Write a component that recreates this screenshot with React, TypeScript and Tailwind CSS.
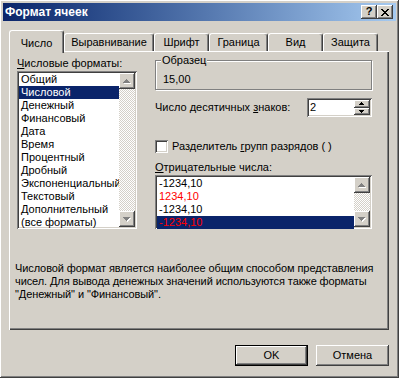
import React from "react";

const raised =
  "shadow-[inset_-1px_-1px_#404040,inset_1px_1px_#ffffff,inset_-2px_-2px_#808080,inset_2px_2px_#d4d0c8]";
const sunken =
  "shadow-[inset_1px_1px_#808080,inset_-1px_-1px_#ffffff,inset_2px_2px_#404040,inset_-2px_-2px_#d4d0c8]";
const dither =
  "bg-[conic-gradient(#ffffff_25%,#d4d0c8_0_50%,#ffffff_0_75%,#d4d0c8_0)] [background-size:2px_2px]";

// pixel triangle, rows drawn as rects so the edges stay crisp
const Tri: React.FC<{ up: boolean; size: number; fill: string; shade?: string }> = ({ up, size, fill, shade }) => {
  const h = Math.ceil(size / 2);
  const rows = Array.from({ length: h }, (_, i) => {
    const r = up ? i : h - 1 - i;
    return { y: i, x: h - 1 - r, w: 2 * r + 1 };
  });
  return (
    <svg width={size + 1} height={h + 1} shapeRendering="crispEdges">
      {shade &&
        rows.map((r) => <rect key={"s" + r.y} x={r.x + 1} y={r.y + 1} width={r.w} height={1} fill={shade} />)}
      {rows.map((r) => (
        <rect key={r.y} x={r.x} y={r.y} width={r.w} height={1} fill={fill} />
      ))}
    </svg>
  );
};

const ScrollBar: React.FC = () => (
  <div className={`flex w-[16px] flex-col ${dither}`}>
    <div className={`flex h-[16px] w-[16px] items-center justify-center bg-[#d4d0c8] ${raised}`}>
      <Tri up size={7} fill="#808080" shade="#ffffff" />
    </div>
    <div className="flex-1" />
    <div className={`flex h-[16px] w-[16px] items-center justify-center bg-[#d4d0c8] ${raised}`}>
      <Tri up={false} size={7} fill="#808080" shade="#ffffff" />
    </div>
  </div>
);

const formats = [
  "Общий",
  "Числовой",
  "Денежный",
  "Финансовый",
  "Дата",
  "Время",
  "Процентный",
  "Дробный",
  "Экспоненциальный",
  "Текстовый",
  "Дополнительный",
  "(все форматы)",
];

const negatives = [
  { text: "-1234,10", red: false },
  { text: "1234,10", red: true },
  { text: "-1234,10", red: false },
  { text: "-1234,10", red: true },
];

const tabs = ["Число", "Выравнивание", "Шрифт", "Граница", "Вид", "Защита"];
const tabWidths = [55, 90, 55, 59, 55, 55];

const Tab: React.FC<{ label: string; width: number; active: boolean }> = ({ label, width, active }) => (
  <div
    style={{ width }}
    className={
      active
        ? "relative z-10 -mb-[2px] flex h-[23px] items-start justify-center rounded-t-[3px] border-l border-t border-r border-white border-r-[#404040] bg-[#d4d0c8] pt-[6px] shadow-[inset_-1px_0_#808080]"
        : "flex h-[18px] items-start justify-center rounded-t-[3px] border-l border-t border-r border-white border-r-[#404040] bg-[#d4d0c8] pt-[2px] shadow-[inset_-1px_0_#808080]"
    }
  >
    <span className="leading-[13px]">{label}</span>
  </div>
);

const Btn: React.FC<{ label: string; primary?: boolean }> = ({ label, primary }) => (
  <div className={primary ? "h-[21px] w-[73px] border border-black" : "h-[21px] w-[73px]"}>
    <div className={`flex h-full w-full items-center justify-center bg-[#d4d0c8] ${raised}`}>{label}</div>
  </div>
);

export default function App() {
  return (
    <div
      className={`flex h-[378px] w-[399px] flex-col bg-[#d4d0c8] p-[3px] font-['Liberation_Sans',Arial,sans-serif] text-[11px] leading-[13px] text-black ${raised}`}
    >
      {/* title bar */}
      <div className="flex h-[18px] items-center bg-gradient-to-r from-[#0a246a] to-[#a6caf0] pl-[2px] pr-[3px]">
        <span className="flex-1 text-[12px] font-bold text-white">Формат ячеек</span>
        <div className={`flex h-[14px] w-[16px] items-center justify-center bg-[#d4d0c8] pb-[1px] font-bold ${raised}`}>
          ?
        </div>
        <div className={`flex h-[14px] w-[16px] items-center justify-center bg-[#d4d0c8] ${raised}`}>
          <svg width="8" height="7" shapeRendering="crispEdges">
            {Array.from({ length: 7 }, (_, i) => (
              <g key={i}>
                <rect x={i} y={i} width={2} height={1} fill="#000" />
                <rect x={6 - i} y={i} width={2} height={1} fill="#000" />
              </g>
            ))}
          </svg>
        </div>
      </div>

      {/* tabs + page */}
      <div className="mx-[6px] mt-[9px] flex flex-col">
        <div className="flex h-[21px] items-end">
          {tabs.map((t, i) => (
            <Tab key={t} label={t} width={tabWidths[i]} active={i === 0} />
          ))}
        </div>
        <div
          className={`flex h-[279px] w-[380px] flex-col pt-[6px] shadow-[inset_1px_1px_#ffffff,inset_-1px_-1px_#404040,inset_-2px_-2px_#808080]`}
        >
          <div className="flex">
            {/* left: format list */}
            <div className="ml-[8px] flex flex-col">
              <div className="h-[13px]">
                <span className="underline underline-offset-[1px]">Ч</span>исловые форматы:
              </div>
              <div className={`mt-[1px] flex h-[158px] w-[120px] bg-white p-[2px] ${sunken}`}>
                <div className="flex w-[100px] flex-col">
                  {formats.map((f, i) => (
                    <div
                      key={f}
                      className={
                        i === 1
                          ? "h-[13px] whitespace-nowrap bg-[#0a246a] pl-[2px] text-white"
                          : "h-[13px] whitespace-nowrap pl-[2px]"
                      }
                    >
                      {f}
                    </div>
                  ))}
                </div>
                <ScrollBar />
              </div>
            </div>

            {/* right side */}
            <div className="ml-[18px] mt-[3px] flex w-[217px] flex-col">
              <div className="relative h-[30px] w-[217px] border border-[#808080] pl-[7px] pt-[12px] shadow-[inset_1px_1px_#ffffff,1px_1px_#ffffff]">
                <span className="absolute -top-[7px] left-[5px] bg-[#d4d0c8] px-[1px]">Образец</span>
                15,00
              </div>

              <div className="mt-[8px] flex h-[19px] items-center justify-between">
                <span>
                  Число десятичных <span className="underline underline-offset-[1px]">з</span>наков:
                </span>
                <div className={`flex h-[19px] w-[65px] bg-white p-[2px] ${sunken}`}>
                  <span className="flex-1 pl-[1px] leading-[15px]">2</span>
                  <div className="flex w-[16px] flex-col">
                    <div className={`flex h-[8px] items-center justify-center bg-[#d4d0c8] ${raised}`}>
                      <Tri up size={5} fill="#000" />
                    </div>
                    <div className={`flex h-[7px] items-center justify-center bg-[#d4d0c8] ${raised}`}>
                      <Tri up={false} size={5} fill="#000" />
                    </div>
                  </div>
                </div>
              </div>

              <div className="mt-[23px] flex h-[13px] items-center">
                <div className={`h-[13px] w-[13px] bg-white ${sunken}`} />
                <span className="ml-[4px] whitespace-nowrap">
                  Разделитель <span className="underline underline-offset-[1px]">г</span>рупп разрядов ( )
                </span>
              </div>

              <div className="mt-[8px] h-[13px]">
                <span className="underline underline-offset-[1px]">О</span>трицательные числа:
              </div>
              <div className={`mt-[1px] flex h-[54px] w-[217px] bg-white p-[2px] ${sunken}`}>
                <div className="flex flex-1 flex-col">
                  {negatives.map((n, i) => (
                    <div
                      key={i}
                      className={[
                        "h-[13px] pl-[2px]",
                        i === 3 ? "bg-[#0a246a]" : "",
                        n.red ? "text-[#ff0000]" : "text-black",
                      ].join(" ")}
                    >
                      {n.text}
                    </div>
                  ))}
                </div>
                <ScrollBar />
              </div>
            </div>
          </div>

          <p className="ml-[6px] mt-[33px] whitespace-nowrap tracking-[-0.1px]">
            Числовой формат является наиболее общим способом представления
            <br />
            чисел. Для вывода денежных значений используются также форматы
            <br />
            "Денежный" и "Финансовый".
          </p>
        </div>
      </div>

      {/* buttons */}
      <div className="mr-[7px] mt-[15px] flex justify-end gap-[8px]">
        <Btn label="OK" primary />
        <Btn label="Отмена" />
      </div>
    </div>
  );
}
